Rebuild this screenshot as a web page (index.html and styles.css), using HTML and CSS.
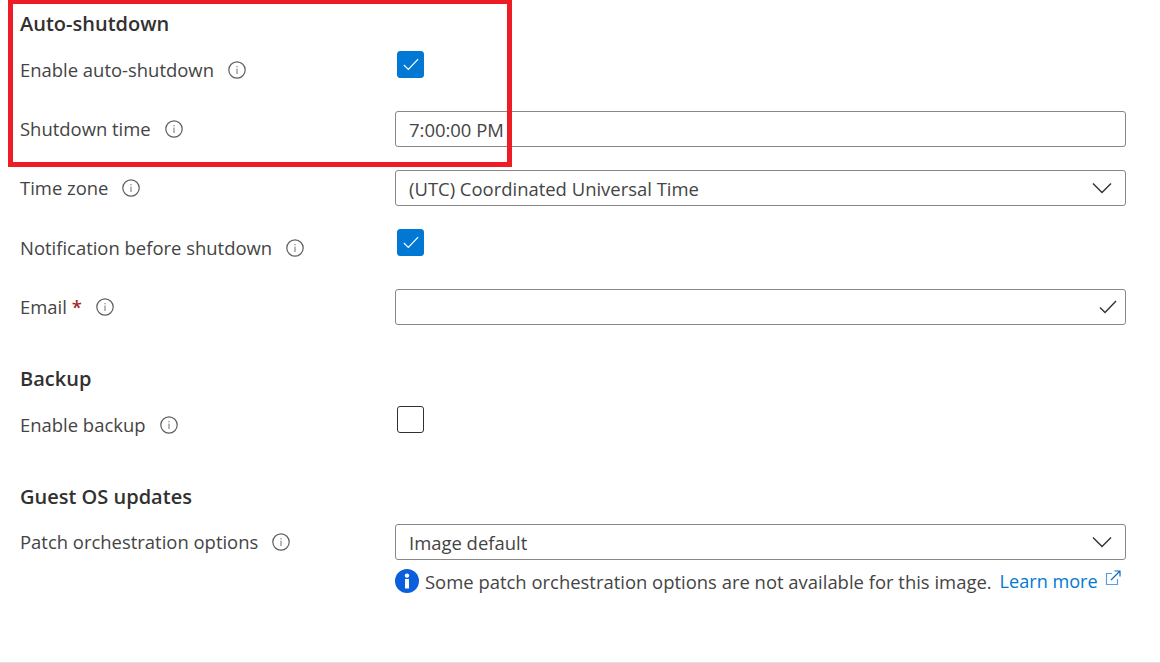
FILE: index.html
```html
<!DOCTYPE html>
<html lang="en">
<head>
  <meta charset="UTF-8" />
  <title>Auto-shutdown settings</title>
  <link rel="stylesheet" href="styles.css">
</head>
<body>
  <svg class="defs" width="0" height="0" aria-hidden="true">
    <symbol id="info" viewBox="0 0 18 18">
      <circle cx="9" cy="9" r="8.2" fill="none" stroke="#605e5c" stroke-width="1.2"/>
      <rect x="8.4" y="7.6" width="1.2" height="5.4" fill="#8a8886"/>
      <rect x="8.4" y="5" width="1.2" height="1.3" fill="#8a8886"/>
    </symbol>
    <symbol id="chevron" viewBox="0 0 20 12">
      <path d="M1 1.5 L10 10.5 L19 1.5" fill="none" stroke="#323130" stroke-width="1.4"/>
    </symbol>
    <symbol id="tick" viewBox="0 0 18 14">
      <path d="M1 7.5 L6 12.5 L17 1" fill="none" stroke="currentColor" stroke-width="1.4"/>
    </symbol>
  </svg>

  <main class="page">
    <section class="group">
      <h2>Auto-shutdown</h2>
      <div class="row">
        <div class="label">Enable auto-shutdown <svg class="info"><use href="#info"/></svg></div>
        <div class="check on"><svg class="check-tick"><use href="#tick"/></svg></div>
      </div>
      <div class="row">
        <div class="label">Shutdown time <svg class="info"><use href="#info"/></svg></div>
        <div class="field">7:00:00 PM</div>
      </div>
      <div class="row">
        <div class="label">Time zone <svg class="info"><use href="#info"/></svg></div>
        <div class="field">(UTC) Coordinated Universal Time <svg class="chevron"><use href="#chevron"/></svg></div>
      </div>
      <div class="row">
        <div class="label">Notification before shutdown <svg class="info"><use href="#info"/></svg></div>
        <div class="check on"><svg class="check-tick"><use href="#tick"/></svg></div>
      </div>
      <div class="row">
        <div class="label"><span>Email <span class="req">*</span></span> <svg class="info"><use href="#info"/></svg></div>
        <div class="field"><svg class="valid"><use href="#tick"/></svg></div>
      </div>
    </section>

    <section class="group">
      <h2>Backup</h2>
      <div class="row">
        <div class="label">Enable backup <svg class="info"><use href="#info"/></svg></div>
        <div class="check"></div>
      </div>
    </section>

    <section class="group">
      <h2>Guest OS updates</h2>
      <div class="row">
        <div class="label">Patch orchestration options <svg class="info"><use href="#info"/></svg></div>
        <div class="field">Image default <svg class="chevron"><use href="#chevron"/></svg></div>
      </div>
      <p class="note">
        <svg class="note-icon" viewBox="0 0 24 24">
          <circle cx="12" cy="12" r="12" fill="#0b5fdc"/>
          <rect x="10" y="10" width="4" height="9.5" fill="#fff"/>
          <circle cx="12" cy="6.6" r="2.2" fill="#fff"/>
        </svg>
        <span>Some patch orchestration options are not available for this image.</span>
        <a href="#learn">Learn more</a>
        <svg class="ext" viewBox="0 0 16 16">
          <path d="M7 3.5 H1.5 V14.5 H12.5 V9" fill="none" stroke="#5a9bea" stroke-width="1.2"/>
          <path d="M6 10 L14.5 1.5 M9.5 1 H15 V6.5" fill="none" stroke="#0f6cbd" stroke-width="1.2"/>
        </svg>
      </p>
    </section>
  </main>

  <div class="highlight"></div>
</body>
</html>
```

FILE: styles.css
```css
body {
  margin: 0;
  font-family: "Open Sans", "Noto Sans", sans-serif;
  font-size: 18.45px;
  color: #444;
  background: #fff;
  overflow: hidden;
}

.defs {
  position: absolute;
}

.page {
  box-sizing: border-box;
  height: 663px;
  padding: 12px 34px 0 20px;
  border-bottom: 1px solid #e1e1e1;
}

.group {
  margin-bottom: 42.2px;
}

h2 {
  margin: 0 0 16px;
  font-size: 20px;
  line-height: 24px;
  font-weight: 600;
  color: #323130;
}

.group:last-child h2 {
  margin-bottom: 15px;
}

.row {
  display: grid;
  grid-template-columns: 375px 1fr;
  height: 36px;
  margin-bottom: 23.2px;
}

.group .row:last-of-type {
  margin-bottom: 0;
}

.label {
  display: flex;
  align-items: center;
  gap: 14px;
  line-height: 36px;
}

.req {
  color: #a4262c;
  font-weight: 600;
}

.info {
  width: 18px;
  height: 18px;
  flex: none;
}

.check {
  box-sizing: border-box;
  width: 27px;
  height: 27px;
  margin: -1px 0 0 2px;
  border: 1px solid #323130;
  border-radius: 3px;
}

.check.on {
  display: flex;
  align-items: center;
  justify-content: center;
  background: #0078d4;
  border-color: #0078d4;
  color: #fff;
}

.check-tick {
  width: 16px;
  height: 13px;
}

.field {
  box-sizing: border-box;
  display: flex;
  align-items: center;
  justify-content: space-between;
  height: 36px;
  padding: 0 13px;
  border: 1px solid #8a8886;
  border-radius: 3px;
  color: #444;
}

.chevron {
  width: 20px;
  height: 12px;
}

.valid {
  width: 18px;
  height: 14px;
  margin-left: auto;
  margin-right: -5px;
  color: #323130;
}

.note {
  display: flex;
  align-items: center;
  margin: 9px 0 0 375px;
  height: 24px;
}

.note-icon {
  width: 24px;
  height: 24px;
  margin-right: 6px;
  flex: none;
}

.note a {
  margin-left: 8px;
  font-size: 18.1px;
  color: #0078d4;
  text-decoration: none;
}

.ext {
  width: 16px;
  height: 16px;
  margin: -6px 0 0 7px;
  flex: none;
}

.highlight {
  position: absolute;
  left: 8px;
  top: -1px;
  box-sizing: border-box;
  width: 504px;
  height: 168px;
  border: 5px solid #ee1c25;
}
```
